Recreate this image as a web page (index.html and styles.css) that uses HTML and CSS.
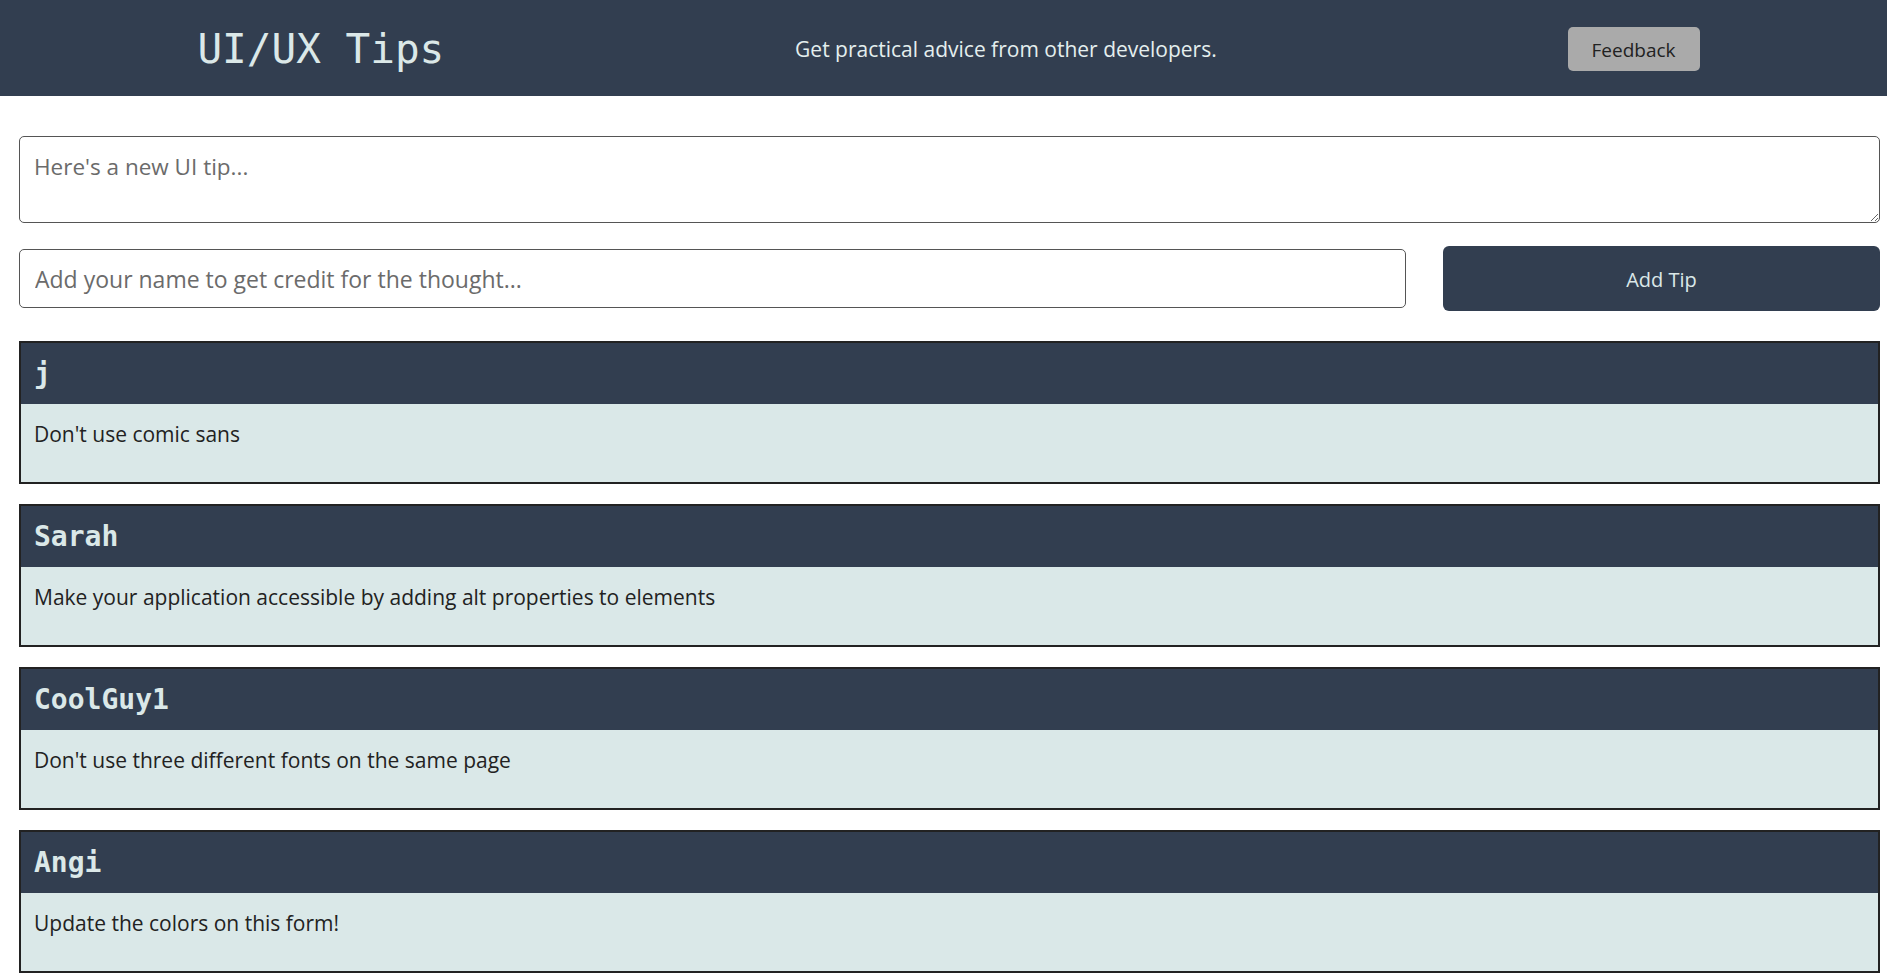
FILE: index.html
```html
<!DOCTYPE html>
<html lang="en">
<head>
<meta charset="utf-8">
<title>UI/UX Tips</title>
<link rel="stylesheet" href="styles.css">
</head>
<body>
<header class="topbar">
  <h1 class="title">UI/UX Tips</h1>
  <p class="tagline">Get practical advice from other developers.</p>
  <button class="feedback">Feedback</button>
</header>
<main class="content">
  <form class="tip-form">
    <textarea class="tip-text" placeholder="Here's a new UI tip..."></textarea>
    <div class="form-row">
      <input class="name-input" type="text" placeholder="Add your name to get credit for the thought...">
      <button class="add-btn" type="button">Add Tip</button>
    </div>
  </form>
  <section class="tips">
    <article class="card">
      <div class="card-head"><h2 class="card-name">j</h2></div>
      <div class="card-body"><p>Don't use comic sans</p></div>
    </article>
    <article class="card">
      <div class="card-head"><h2 class="card-name">Sarah</h2></div>
      <div class="card-body"><p>Make your application accessible by adding alt properties to elements</p></div>
    </article>
    <article class="card">
      <div class="card-head"><h2 class="card-name">CoolGuy1</h2></div>
      <div class="card-body"><p>Don't use three different fonts on the same page</p></div>
    </article>
    <article class="card">
      <div class="card-head"><h2 class="card-name">Angi</h2></div>
      <div class="card-body"><p>Update the colors on this form!</p></div>
    </article>
  </section>
</main>
</body>
</html>
```
FILE: styles.css
```css
* { box-sizing: border-box; }

body {
  margin: 0;
  font-family: "Open Sans", "Noto Sans", sans-serif;
  background: #ffffff;
  color: #222222;
}

.topbar {
  height: 96px;
  padding: 2px 12px 0 22px;
  background: #323e50;
  display: flex;
  align-items: center;
  justify-content: space-around;
}

.title {
  margin: 0;
  font-family: "DejaVu Sans Mono", monospace;
  font-weight: normal;
  font-size: 41px;
  color: #dbe8e8;
}

.tagline {
  margin: 0;
  font-size: 21px;
  color: #e4eeee;
}

.feedback {
  width: 132px;
  height: 44px;
  border: none;
  border-radius: 5px;
  background: #aaaaaa;
  color: #222222;
  font-family: inherit;
  font-size: 19px;
  padding-top: 2px;
}

.content {
  padding: 40px 7px 0 19px;
}

.tip-text {
  display: block;
  width: 100%;
  height: 87px;
  padding: 14px 14px 8px;
  border: 1px solid #555555;
  border-radius: 5px;
  font-family: inherit;
  font-size: 22.5px;
  color: #222;
}

.tip-text::placeholder,
.name-input::placeholder {
  color: #6b6b6b;
}

.form-row {
  margin-top: 23px;
  display: flex;
  align-items: center;
  gap: 37px;
}

.name-input {
  flex: 1;
  height: 59px;
  padding: 0 15px;
  border: 1px solid #555555;
  border-radius: 5px;
  font-family: inherit;
  font-size: 23px;
}

.add-btn {
  width: 437px;
  height: 65px;
  border: none;
  border-radius: 6px;
  background: #323e50;
  color: #dbe8e8;
  font-family: inherit;
  font-size: 20px;
  padding-top: 2px;
}

.tips {
  margin-top: 30px;
}

.card {
  border: 2px solid #222222;
  margin-bottom: 20px;
}

.card-head {
  height: 61px;
  background: #323e50;
  display: flex;
  align-items: center;
  padding: 0 13px;
}

.card-name {
  margin: 0;
  font-family: "DejaVu Sans Mono", monospace;
  font-weight: bold;
  font-size: 28px;
  color: #dbe8e8;
}

.card-body {
  background: #dae8e8;
  padding: 17px 13px 34px;
}

.card-body p {
  margin: 0;
  font-size: 21px;
  line-height: 27px;
  color: #222222;
}
```
